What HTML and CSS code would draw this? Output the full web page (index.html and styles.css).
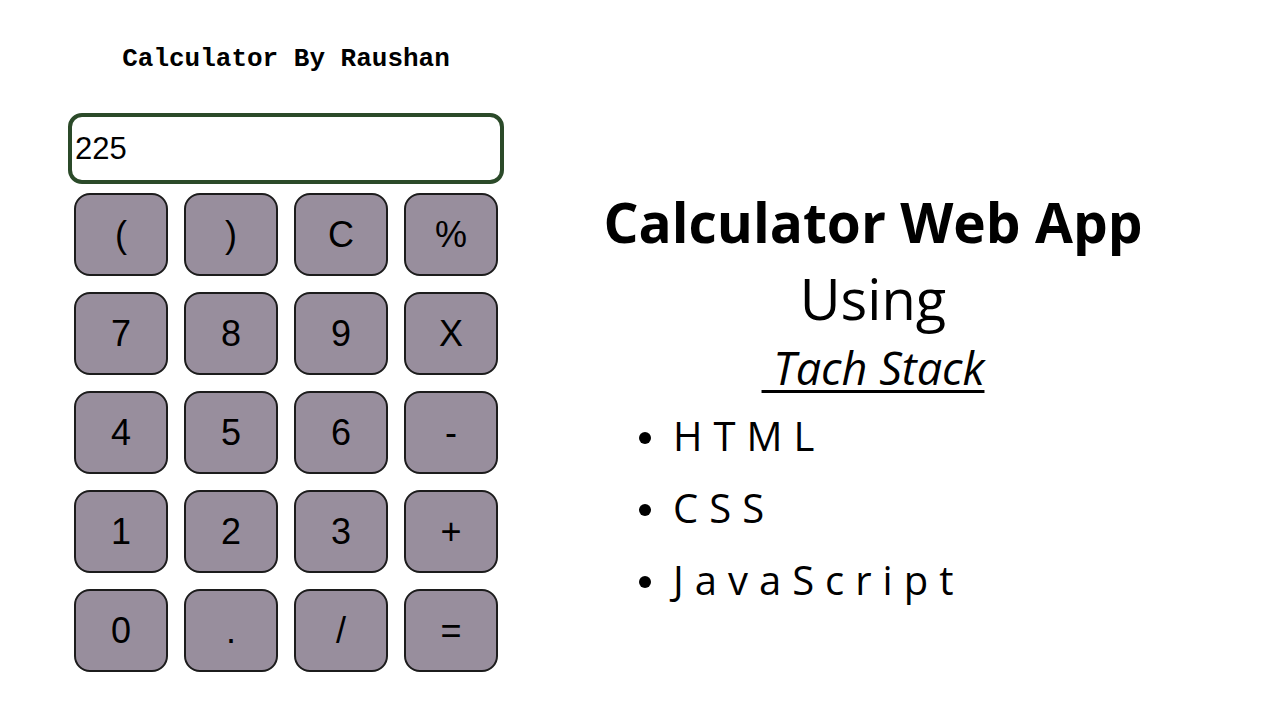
FILE: index.html
```html
<!DOCTYPE html>
<html lang="en">
<head>
<meta charset="utf-8">
<title>Calculator Web App</title>
<link rel="stylesheet" href="styles.css">
</head>
<body>
<main class="page">
  <section class="calc">
    <h1 class="calc-title">Calculator By Raushan</h1>
    <div class="display">225</div>
    <div class="keys">
      <button class="key">(</button>
      <button class="key">)</button>
      <button class="key">C</button>
      <button class="key">%</button>
      <button class="key">7</button>
      <button class="key">8</button>
      <button class="key">9</button>
      <button class="key">X</button>
      <button class="key">4</button>
      <button class="key">5</button>
      <button class="key">6</button>
      <button class="key">-</button>
      <button class="key">1</button>
      <button class="key">2</button>
      <button class="key">3</button>
      <button class="key">+</button>
      <button class="key">0</button>
      <button class="key">.</button>
      <button class="key">/</button>
      <button class="key">=</button>
    </div>
  </section>
  <section class="info">
    <h2 class="info-title">Calculator Web App</h2>
    <p class="info-using">Using</p>
    <p class="info-stack">&nbsp;Tach Stack</p>
    <ul class="stack-list">
      <li class="stack-item">HTML</li>
      <li class="stack-item">CSS</li>
      <li class="stack-item">JavaScript</li>
    </ul>
  </section>
</main>
</body>
</html>
```
FILE: styles.css
```css
html, body {
  margin: 0;
  padding: 0;
  background: #ffffff;
  color: #000000;
}

.page {
  display: flex;
  width: 1280px;
  height: 720px;
  overflow: hidden;
}

.calc {
  width: 436px;
  margin-left: 68px;
  display: flex;
  flex-direction: column;
}

.calc-title {
  margin: 44px 0 0 0;
  font-family: "Liberation Mono", "Courier New", monospace;
  font-weight: bold;
  font-size: 26px;
  line-height: 30px;
  text-align: center;
}

.display {
  margin-top: 39px;
  height: 63px;
  border: 4px solid #2b4a29;
  border-radius: 14px;
  padding-left: 3px;
  display: flex;
  align-items: center;
  font-family: "Liberation Sans", Arial, sans-serif;
  font-size: 31px;
}

.keys {
  margin-top: 9px;
  padding: 0 6px;
  display: grid;
  grid-template-columns: repeat(4, 94px);
  grid-auto-rows: 83px;
  column-gap: 16px;
  row-gap: 16px;
}

.key {
  margin: 0;
  padding: 0;
  box-sizing: border-box;
  background: #988e9d;
  border: 2px solid #1c1c1c;
  border-radius: 16px;
  font-family: "Liberation Sans", Arial, sans-serif;
  font-size: 36px;
  color: #000000;
  display: flex;
  align-items: center;
  justify-content: center;
}

.info {
  width: 614px;
  margin-left: 62px;
  display: flex;
  flex-direction: column;
  align-items: center;
  font-family: "Open Sans", sans-serif;
}

.info-title {
  margin: 190px 0 0 0;
  font-size: 55px;
  font-weight: 700;
  line-height: 64px;
}

.info-using {
  margin: 12px 0 0 0;
  font-size: 56px;
  font-weight: 400;
  line-height: 64px;
}

.info-stack {
  margin: 12px 0 0 0;
  font-size: 45px;
  font-style: italic;
  line-height: 52px;
  text-decoration: underline;
  text-decoration-thickness: 3px;
  text-underline-offset: 5px;
}

.stack-list {
  align-self: flex-start;
  list-style: none;
  margin: 6px 0 0 73px;
  padding: 0;
}

.stack-item {
  display: flex;
  align-items: center;
  font-size: 40px;
  line-height: 72px;
  letter-spacing: 11px;
}

.stack-item::before {
  content: "";
  width: 12px;
  height: 12px;
  border-radius: 50%;
  background: #000000;
  margin-right: 22px;
  margin-top: 4px;
  flex: none;
}
```
